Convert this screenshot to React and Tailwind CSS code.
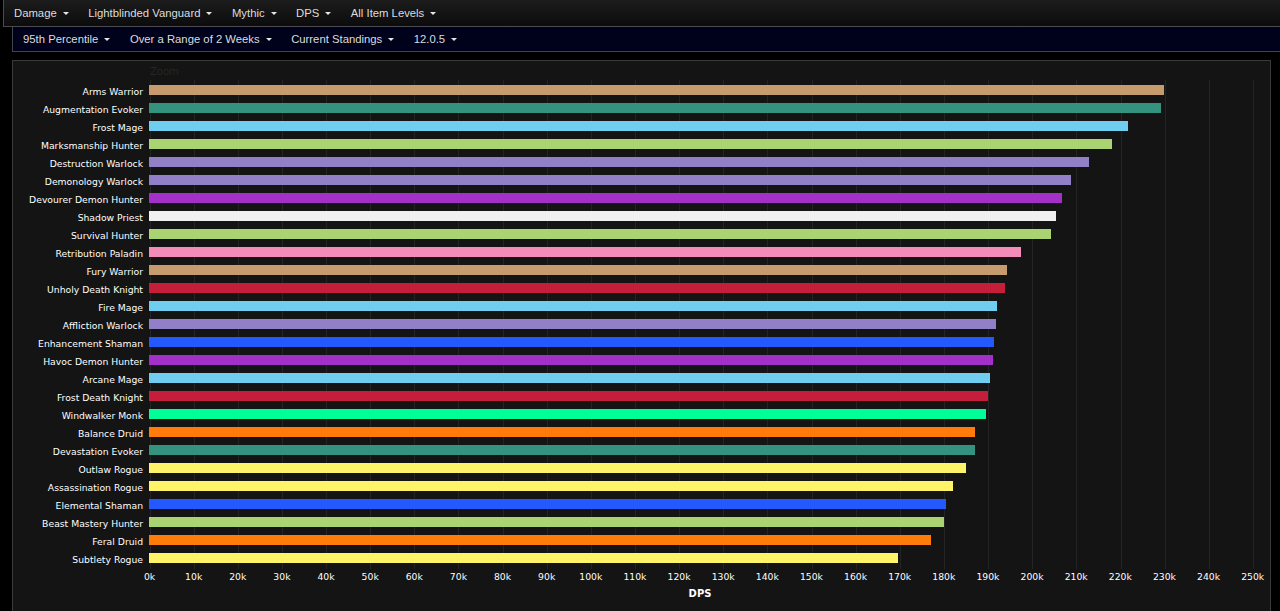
const rows = [
  ["Arms Warrior", 1164, "#c69b6d"],
  ["Augmentation Evoker", 1161, "#33937f"],
  ["Frost Mage", 1128, "#6fcdf0"],
  ["Marksmanship Hunter", 1112, "#aad372"],
  ["Destruction Warlock", 1089, "#9180c8"],
  ["Demonology Warlock", 1071, "#9180c8"],
  ["Devourer Demon Hunter", 1062, "#a330c9"],
  ["Shadow Priest", 1056, "#f0f0f0"],
  ["Survival Hunter", 1051, "#aad372"],
  ["Retribution Paladin", 1021, "#f48cba"],
  ["Fury Warrior", 1007, "#c69b6d"],
  ["Unholy Death Knight", 1005, "#c41e3a"],
  ["Fire Mage", 997, "#6fcdf0"],
  ["Affliction Warlock", 995.5, "#9180c8"],
  ["Enhancement Shaman", 994, "#2359ff"],
  ["Havoc Demon Hunter", 993, "#a330c9"],
  ["Arcane Mage", 989.5, "#6fcdf0"],
  ["Frost Death Knight", 988, "#c41e3a"],
  ["Windwalker Monk", 986, "#00ff98"],
  ["Balance Druid", 975, "#ff7c0a"],
  ["Devastation Evoker", 975, "#33937f"],
  ["Outlaw Rogue", 965.5, "#fff468"],
  ["Assassination Rogue", 952.5, "#fff468"],
  ["Elemental Shaman", 945.5, "#2359ff"],
  ["Beast Mastery Hunter", 944, "#aad372"],
  ["Feral Druid", 931, "#ff7c0a"],
  ["Subtlety Rogue", 898, "#fff468"],
];
const PLOT_LEFT = 150;
const ticks = Array.from({ length: 26 }, (_, i) => i * 10);

function Menu({ children }) {
  return (
    <span className="flex items-center gap-[6px] whitespace-nowrap">
      {children}
      <span className="w-0 h-0 border-x-[3.5px] border-x-transparent border-t-[3.5px] border-t-[#e6e6e6] mt-[1px]" />
    </span>
  );
}

export default function App() {
  return (
    <div className="h-[611px] w-[1280px] overflow-hidden bg-black font-['Liberation_Sans',Arial,sans-serif] text-[#dcdcdc]">
      <div className="ml-[3px] h-[27px] flex items-center gap-[19.5px] pl-[10px] text-[11.3px] border-l border-b border-[#4a4a50] bg-gradient-to-b from-[#1c1c1c] to-[#0c0c0c]">
        <Menu>Damage</Menu>
        <Menu>Lightblinded Vanguard</Menu>
        <Menu>Mythic</Menu>
        <Menu>DPS</Menu>
        <Menu>All Item Levels</Menu>
      </div>
      <div className="ml-[12px] h-[25px] flex items-center gap-[19.5px] pl-[10px] text-[11.3px] border-l border-b border-[#44444c] bg-[#00021c]">
        <Menu>95th Percentile</Menu>
        <Menu>Over a Range of 2 Weeks</Menu>
        <Menu>Current Standings</Menu>
        <Menu>12.0.5</Menu>
      </div>
      <div className="relative mt-[8px] ml-[12px] w-[1259px] h-[551px] bg-[#141414] border-l border-t border-r border-[#3a3a3a] font-['DejaVu_Sans',sans-serif] text-[9.25px] text-white">
        <div className="absolute left-[137px] top-[3px] text-[10px] text-[#262626]">Zoom</div>
        <div className="absolute top-[19px] left-0 h-[489px] w-full pointer-events-none">
          {ticks.map((t, i) => (
            <div key={t} className="absolute top-0 bottom-0 w-px bg-[#242424]" style={{ left: 136.5 + i * 44.14 }} />
          ))}
        </div>
        <div className="relative pt-[20px] flex flex-col">
          {rows.map(([name, end, color]) => (
            <div key={name} className="h-[18px] flex items-center">
              <div className="w-[130px] shrink-0 text-right whitespace-nowrap leading-none translate-y-[2px]">{name}</div>
              <div className="ml-[6px] h-[10px]" style={{ width: end - PLOT_LEFT + 1, backgroundColor: color }} />
            </div>
          ))}
        </div>
        <div className="ml-[114.5px] flex mt-[3px]">
          {ticks.map((t) => (
            <div key={t} className="w-[44.14px] shrink-0 text-center leading-[14px]">{t}k</div>
          ))}
        </div>
        <div className="mt-[3px] ml-[136px] w-[1104px] text-center font-bold text-[10px] leading-[14px] -translate-x-[1px]">DPS</div>
      </div>
    </div>
  );
}
